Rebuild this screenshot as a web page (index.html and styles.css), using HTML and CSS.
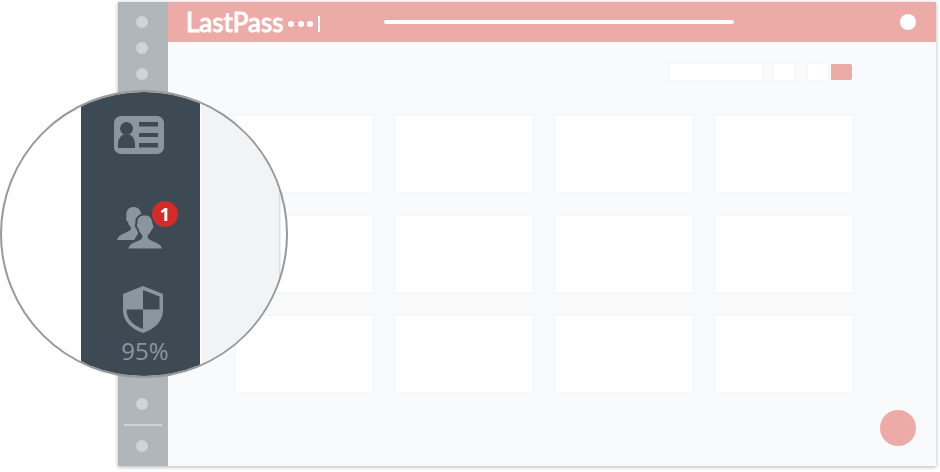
FILE: index.html
```html
<!DOCTYPE html>
<html lang="en">
<head>
<meta charset="utf-8">
<meta name="viewport" content="width=device-width, initial-scale=1">
<title>LastPass</title>
<link rel="stylesheet" href="styles.css">
</head>
<body>
<div class="window">
  <aside class="rail">
    <div class="rail-group">
      <span class="dot"></span>
      <span class="dot"></span>
      <span class="dot"></span>
    </div>
    <div class="rail-group">
      <span class="dot"></span>
      <span class="rail-line"></span>
      <span class="dot"></span>
    </div>
  </aside>
  <div class="app">
    <header class="topbar">
      <div class="logo">
        <span class="logo-name">LastPass</span>
        <svg class="logo-mark" viewBox="0 0 34 20" aria-hidden="true">
          <circle cx="4" cy="10" r="3"/><circle cx="14" cy="10" r="3"/><circle cx="23" cy="10" r="3"/>
          <rect x="31" y="2" width="2" height="16"/>
        </svg>
      </div>
      <div class="search-line"></div>
      <span class="avatar"></span>
    </header>
    <main class="content">
      <div class="toolbar">
        <input class="filter" type="text" aria-label="Filter">
        <button class="tool" type="button" aria-label="Sort"></button>
        <div class="toggle">
          <button class="tool" type="button" aria-label="List view"></button>
          <button class="tool-active" type="button" aria-label="Grid view"></button>
        </div>
      </div>
      <div class="cards">
        <div class="card"></div><div class="card"></div><div class="card"></div><div class="card"></div>
        <div class="card"></div><div class="card"></div><div class="card"></div><div class="card"></div>
        <div class="card"></div><div class="card"></div><div class="card"></div><div class="card"></div>
      </div>
    </main>
    <button class="add" type="button" aria-label="Add item"></button>
  </div>
</div>

<div class="lens">
  <nav class="lens-nav" aria-label="Vault">
    <a class="nav-item" href="#form-fills" aria-label="Form fills">
      <svg width="50" height="38" viewBox="0 0 50 38" aria-hidden="true">
        <rect class="light" width="50" height="38" rx="7"/>
        <g class="dark">
          <circle cx="12.5" cy="12.500" r="6.500"/>
          <path d="M4 32v-4c0-5 3-9 6-9.500h5c3 .5 6 4.500 6 9.500v4z"/>
          <rect x="25" y="6" width="19" height="4.500"/><rect x="25" y="17" width="19" height="4"/><rect x="25" y="27" width="19" height="4.500"/>
        </g>
      </svg>
    </a>
    <a class="nav-item sharing" href="#sharing" aria-label="Sharing center, 1 new">
      <svg width="50" height="44" viewBox="0 0 50 44" aria-hidden="true">
        <path class="light" d="M3 34C4 29.500 9 28 14 25.500C17 24 17.500 23 16.500 20.500C15 19.500 14.500 18.500 14 16C12 15 11.500 12 12.500 11C11.500 5 14.500 1 19.500 1C23 1 26 3 27 7L28 12L27 16L25 26L20 34Z"/>
        <path class="light outlined" d="M14.500 42.500C15.500 37.500 20.500 36.500 25 34.500C28.500 33 29 31.500 28 28.500C26 27 25 25 24.500 22.500C22.500 21 22.500 18.500 23.500 17C23 12 25.500 9.500 31 9.500C35.500 9.500 37.500 12 38 16L39.500 21L36.500 26L34 29C33 31.500 34 33 37 34.500C41.500 36.500 47 38 48 42.500Z"/>
      </svg>
      <span class="badge">1</span>
    </a>
    <a class="nav-item security" href="#security">
      <svg width="50" height="48" viewBox="0 0 50 48" aria-hidden="true">
        <path class="light" d="M29 0L49 8V24C49 35 41 43 29 47C17 43 9 35 9 24V8Z"/>
        <path class="dark" d="M29 4V23.500H45.500V10.500ZM12.500 23.500H29V43C19 39.500 12.500 33 12.500 23.500Z"/>
      </svg>
      <span class="score">95%</span>
    </a>
  </nav>
  <div class="lens-panel"></div>
</div>
</body>
</html>
```
FILE: styles.css
```css
* {
  box-sizing: border-box;
}

body {
  display: flex;
  min-height: 100vh;
  margin: 0;
  padding: 2px 4px 6px 118px;
  background: #fff;
  font-family: "Open Sans", "Noto Sans", sans-serif;
}

button,
input {
  margin: 0;
  padding: 0;
  border: 0;
}

.window {
  display: flex;
  flex: 1;
  background: #f9fafc;
  box-shadow: 0 1px 4px rgba(0, 0, 0, 0.3);
}

.rail {
  display: flex;
  flex-direction: column;
  justify-content: space-between;
  width: 50px;
  padding: 14px 6px;
  background: #b0b6ba;
}

.rail-group {
  display: flex;
  flex-direction: column;
  gap: 14px;
}

.dot {
  width: 12px;
  height: 12px;
  margin-left: 12px;
  border-radius: 50%;
  background: #cfd4d8;
}

.rail-line {
  height: 2px;
  background: #cfd4d8;
}

.app {
  position: relative;
  flex: 1;
}

.topbar {
  display: flex;
  align-items: center;
  height: 40px;
  padding: 0 20px 0 18px;
  background: #edaba7;
}

.logo {
  display: flex;
  align-items: center;
  gap: 3px;
  width: 198px;
  color: #fff;
}

.logo-name {
  font-family: Lato, sans-serif;
  font-size: 26px;
  line-height: 40px;
  -webkit-text-stroke: 1px #fff;
}

.logo-mark {
  width: 34px;
  height: 20px;
  margin-top: 4px;
  fill: #fff;
}

.search-line {
  flex: 0 1 350px;
  height: 4px;
  border-radius: 2px;
  background: #fff;
}

.avatar {
  width: 16px;
  height: 16px;
  margin-left: auto;
  border-radius: 50%;
  background: #fff;
}

.content {
  padding: 20px 82px 72px 66px;
}

.toolbar {
  display: flex;
  justify-content: flex-end;
  gap: 8px;
  margin-bottom: 32px;
}

.filter {
  width: 96px;
  height: 20px;
  border: 2px solid #f7f7f8;
  border-radius: 4px;
  background: #fff;
}

.tool {
  width: 24px;
  height: 20px;
  border: 2px solid #f7f7f8;
  border-radius: 4px;
  background: #fff;
}

.toggle {
  display: flex;
  align-items: center;
  gap: 1px;
  padding: 0 2px;
}

.tool-active {
  width: 21px;
  height: 16px;
  border-radius: 0 2px 2px 0;
  background: #edaba7;
}

.cards {
  display: grid;
  grid-template-columns: repeat(4, 1fr);
  gap: 20px;
}

.card {
  height: 80px;
  border: 2px solid #f7f7f8;
  background: #fff;
}

.add {
  position: absolute;
  right: 20px;
  bottom: 20px;
  width: 36px;
  height: 36px;
  border-radius: 50%;
  background: #edaba7;
}

.lens {
  position: absolute;
  top: 90px;
  left: 0;
  display: flex;
  width: 288px;
  height: 288px;
  padding-left: 79px;
  overflow: hidden;
  border: 2px solid #999;
  border-radius: 50%;
  background: #fff;
}

.lens-nav {
  width: 119px;
  padding: 24px 0 0 33px;
  background: #3d4a54;
}

.lens-panel {
  width: 79px;
  border-left: 1px solid #fff;
  background: #f2f3f5;
  box-shadow: 1px 0 2px rgba(0, 0, 0, 0.2);
}

.nav-item {
  display: block;
  position: relative;
  width: 62px;
  color: #8a969f;
  text-decoration: none;
}

.nav-item svg {
  display: block;
}

.light {
  fill: #8a969f;
}

.dark {
  fill: #3d4a54;
}

.outlined {
  stroke: #3d4a54;
  stroke-width: 4px;
  paint-order: stroke;
}

.sharing {
  margin-top: 52px;
}

.security {
  margin-top: 36px;
}

.badge {
  position: absolute;
  top: -5px;
  right: -2px;
  width: 26px;
  height: 26px;
  border-radius: 50%;
  background: #d22b28;
  color: #fff;
  font-size: 18px;
  font-weight: 700;
  line-height: 26px;
  text-align: center;
}

.score {
  display: block;
  font-size: 24px;
  font-weight: 500;
  line-height: 34px;
  text-align: center;
}
```
